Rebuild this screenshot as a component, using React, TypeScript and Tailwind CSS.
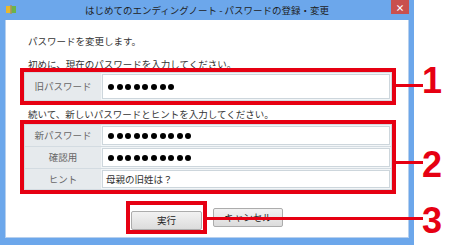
import React from "react";

const jp = "font-['Noto_Sans_CJK_JP','Noto_Sans',sans-serif]";

type RowProps = { label: string; value?: string; dots?: number; last?: boolean; h: string };

const FieldRow = ({ label, value, dots, last, h }: RowProps) => (
    <div className={`flex ${h} ${last ? "" : "border-b border-[#d3dbe1]"}`}>
        <div className="w-[76px] shrink-0 bg-[#e6eaed] flex items-center justify-center text-[9.5px] text-[#666]">
            {label}
        </div>
        <div className="flex-1 p-[1px] bg-[#f3f6f8]">
            {dots ? (
                <div className="h-full bg-white border border-[#cdd6dc] flex items-center gap-[2.6px] pl-[5px]">
                    {Array.from({ length: dots }).map((_, i) => (
                        <span key={i} className="w-[6px] h-[6px] rounded-full bg-black" />
                    ))}
                </div>
            ) : (
                <div className="h-full bg-white border border-[#cdd6dc] flex items-center pl-[3px] text-[9.5px] text-[#333]">
                    {value}
                </div>
            )}
        </div>
    </div>
);

const Callout = ({ n, top, line }: { n: string; top: number; line: string }) => (
    <>
        <div className={`absolute left-[396px] w-[27px] h-[3px] bg-[#e60012] ${line}`} />
        <span
            className="absolute left-[422px] text-[36px] leading-none font-bold text-[#e60012] font-['Liberation_Sans',Arial,sans-serif]"
            style={{ top }}
        >
            {n}
        </span>
    </>
);

export default function App() {
    return (
        <div className={`relative w-[450px] h-[245px] bg-white overflow-hidden ${jp}`}>
            <div className="w-[414px] h-[245px] bg-[#6ca7eb] flex flex-col">
                {/* title bar */}
                <div className="h-[20px] shrink-0 flex items-start relative">
                    <svg className="absolute left-[6px] top-[5px]" width="10" height="9" viewBox="0 0 10 9">
                        <rect x="0" y="1" width="4.5" height="7" fill="#e8b830" />
                        <rect x="5.5" y="1" width="4.5" height="7" fill="#6cb34a" />
                        <rect x="4.5" y="0" width="1" height="9" fill="#c08a20" />
                    </svg>
                    <div className="flex-1 text-center text-[9.5px] leading-[20px] text-[#1e1e1e]">
                        はじめてのエンディングノート - パスワードの登録・変更
                    </div>
                    <div className="absolute right-[5px] top-0 w-[18px] h-[14px] bg-[#c9504e] flex items-center justify-center text-white text-[9px] font-bold leading-none">
                        ×
                    </div>
                </div>
                {/* client area */}
                <div className="mx-[5px] h-[218px] bg-white border border-[#b7d0ee] border-t-0 flex flex-col text-[#333]">
                    <p className="mt-[14px] ml-[22px] text-[9.5px] leading-[14px]">パスワードを変更します。</p>
                    <p className="mt-[10px] ml-[22px] text-[9.5px] leading-[12px]">初めに、現在のパスワードを入力してください。</p>
                    <div className="mt-[-2px] ml-[14px] w-[376px] border-4 border-[#e60012] bg-white">
                        <div className="border border-[#d3dbe1]">
                            <FieldRow label="旧パスワード" dots={8} last h="h-[27px]" />
                        </div>
                    </div>
                    <p className="mt-[3px] ml-[22px] text-[9.5px] leading-[12px]">続いて、新しいパスワードとヒントを入力してください。</p>
                    <div className="ml-[14px] w-[376px] border-4 border-[#e60012] bg-white">
                        <div className="border border-[#d3dbe1]">
                            <FieldRow label="新パスワード" dots={10} h="h-[22px]" />
                            <FieldRow label="確認用" dots={10} h="h-[22px]" />
                            <FieldRow label="ヒント" value="母親の旧姓は？" last h="h-[20px]" />
                        </div>
                    </div>
                    <div className="mt-[7px] ml-[120px] flex items-center gap-[6px]">
                        <div className="border-4 border-[#e60012] px-[1px]">
                            <button className="w-[71px] h-[19px] rounded-[2px] border border-[#acacac] bg-gradient-to-b from-[#f2f2f2] to-[#dcdcdc] text-[9.5px] text-[#222]">
                                実行
                            </button>
                        </div>
                        <button className="w-[70px] h-[19px] rounded-[2px] border border-[#acacac] bg-gradient-to-b from-[#f2f2f2] to-[#dcdcdc] text-[9.5px] text-[#222]">
                            キャンセル
                        </button>
                    </div>
                </div>
            </div>
            <Callout n="1" top={63} line="top-[84px]" />
            <Callout n="2" top={147} line="top-[161px]" />
            <div className="absolute left-[207px] top-[217px] w-[216px] h-[3px] bg-[#e60012]" />
            <span className="absolute left-[422px] top-[203px] text-[36px] leading-none font-bold text-[#e60012] font-['Liberation_Sans',Arial,sans-serif]">
                3
            </span>
        </div>
    );
}
